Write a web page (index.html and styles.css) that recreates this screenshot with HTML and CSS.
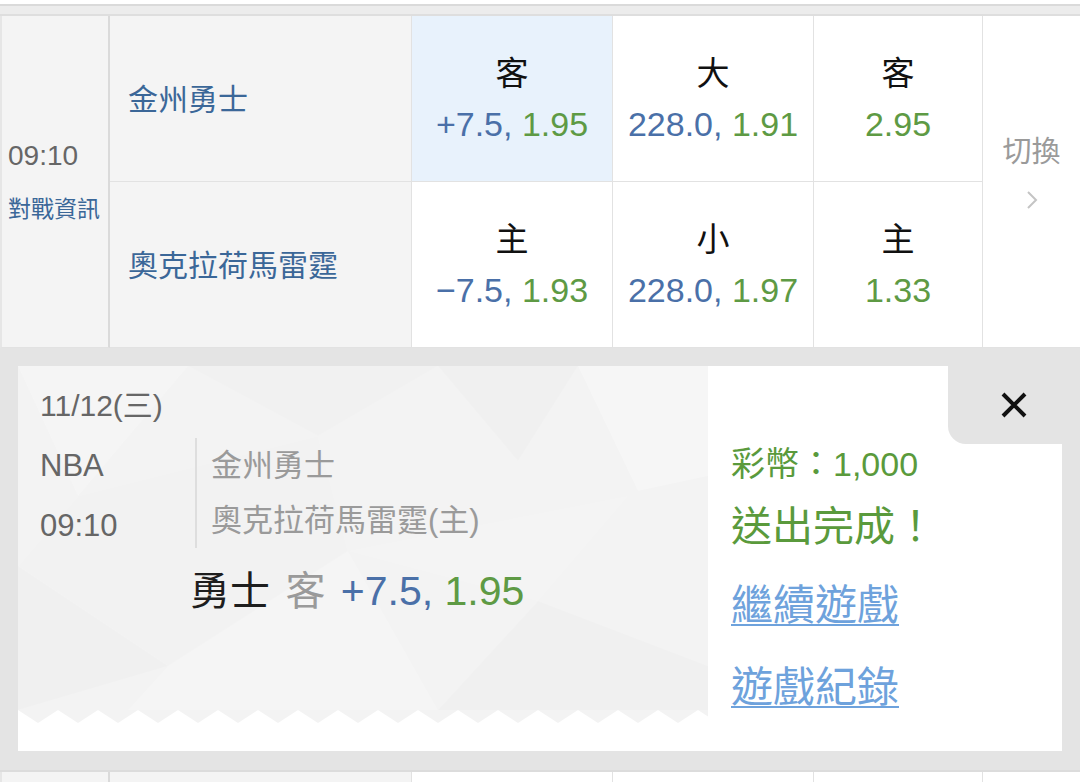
FILE: index.html
```html
<!DOCTYPE html>
<html>
<head>
    <meta charset="utf-8">
    <link rel="stylesheet" href="styles.css">
</head>
<body>
    <div class="top-gap"></div>
    <div class="band"></div>

    <div class="match">
        <div class="cell time-cell">
            <div class="kickoff">09:10</div>
            <div class="info-link">對戰資訊</div>
        </div>
        <div class="cell team-cell">金州勇士</div>
        <div class="cell odds-cell selected">
            <div class="odds-label">客</div>
            <div class="odds-value"><span class="line">+7.5,</span> <span class="price">1.95</span></div>
        </div>
        <div class="cell odds-cell">
            <div class="odds-label">大</div>
            <div class="odds-value"><span class="line">228.0,</span> <span class="price">1.91</span></div>
        </div>
        <div class="cell odds-cell">
            <div class="odds-label">客</div>
            <div class="odds-value"><span class="price">2.95</span></div>
        </div>
        <div class="cell switch-cell">
            <div class="switch-text">切換</div>
            <svg class="chevron" width="14" height="22" viewBox="0 0 14 22">
                <polyline points="3,3 11,11 3,19" fill="none" stroke="#c4c4c4" stroke-width="2"/>
            </svg>
        </div>
        <div class="cell team-cell">奧克拉荷馬雷霆</div>
        <div class="cell odds-cell">
            <div class="odds-label">主</div>
            <div class="odds-value"><span class="line">&minus;7.5,</span> <span class="price">1.93</span></div>
        </div>
        <div class="cell odds-cell">
            <div class="odds-label">小</div>
            <div class="odds-value"><span class="line">228.0,</span> <span class="price">1.97</span></div>
        </div>
        <div class="cell odds-cell">
            <div class="odds-label">主</div>
            <div class="odds-value"><span class="price">1.33</span></div>
        </div>
    </div>

    <div class="panel">
        <div class="receipt">
            <div class="ticket">
                <div class="ticket-body">
                    <svg class="poly" width="690" height="344" viewBox="0 0 690 344">
                        <polygon points="0,0 170,0 60,130" fill="#fff" opacity=".2"/>
                        <polygon points="170,0 420,0 300,70" fill="#000" opacity=".006"/>
                        <polygon points="420,0 560,0 500,95" fill="#000" opacity=".01"/>
                        <polygon points="560,0 690,0 690,110 620,125" fill="#fff" opacity=".25"/>
                        <polygon points="0,200 150,300 0,344" fill="#000" opacity=".012"/>
                        <polygon points="150,300 330,185 420,344 110,344" fill="#fff" opacity=".18"/>
                        <polygon points="420,344 520,235 690,300 690,344" fill="#000" opacity=".01"/>
                        <polygon points="330,185 520,235 610,130" fill="#fff" opacity=".15"/>
                        <polygon points="60,130 300,70 330,185 150,300 0,200" fill="#000" opacity=".005"/>
                    </svg>
                    <div class="ticket-content">
                        <div class="ticket-date">11/12(三)</div>
                        <div class="ticket-info">
                            <div class="league">
                                <div>NBA</div>
                                <div>09:10</div>
                            </div>
                            <div class="teams">
                                <div>金州勇士</div>
                                <div>奧克拉荷馬雷霆(主)</div>
                            </div>
                        </div>
                        <div class="pick">
                            <span class="pick-team">勇士</span>
                            <span class="pick-side">客</span>
                            <span class="line">+7.5,</span> <span class="price">1.95</span>
                        </div>
                    </div>
                </div>
                <svg class="zigzag" width="690" height="13" viewBox="0 0 690 13">
                    <defs>
                        <pattern id="teeth" width="40" height="13" patternUnits="userSpaceOnUse">
                            <polygon points="0,0 40,0 20,13" fill="#f3f3f3"/>
                        </pattern>
                    </defs>
                    <rect width="690" height="13" fill="url(#teeth)"/>
                </svg>
            </div>

            <div class="result">
                <div class="close-tab">
                    <svg width="28" height="28" viewBox="0 0 28 28">
                        <path d="M3 3 L25 25 M25 3 L3 25" stroke="#111" stroke-width="4"/>
                    </svg>
                </div>
                <div class="result-text">
                    <div class="coins">彩幣：1,000</div>
                    <div class="done">送出完成！</div>
                    <a class="result-link">繼續遊戲</a>
                    <a class="result-link">遊戲紀錄</a>
                </div>
            </div>
        </div>
    </div>

    <div class="match next">
        <div class="cell time-cell"></div>
        <div class="cell team-cell"></div>
        <div class="cell odds-cell"></div>
        <div class="cell odds-cell"></div>
        <div class="cell odds-cell"></div>
        <div class="cell switch-cell"></div>
    </div>
</body>
</html>
```

FILE: styles.css
```css
body {
    margin: 0;
    width: 1080px;
    height: 782px;
    overflow: hidden;
    background: #fff;
    font-family: "Liberation Sans", "Noto Sans CJK TC", sans-serif;
}

.top-gap {
    height: 4px;
}
.band {
    height: 8px;
    background: #ececec;
    border-top: 2px solid #dadada;
    border-bottom: 2px solid #dedede;
}

/* match table */
.match {
    display: grid;
    grid-template-columns: 110px 302px 201px 201px 169px 1fr;
    grid-template-rows: 166px 166px;
}
.cell {
    box-sizing: border-box;
    border-bottom: 1px solid #e2e2e2;
}
.time-cell {
    grid-row: span 2;
    background: #f4f4f4;
    border-left: 2px solid #e6e6e6;
    border-right: 2px solid #dadada;
    padding: 122px 0 0 6px;
}
.kickoff {
    font-size: 28px;
    line-height: 36px;
    color: #666;
}
.info-link {
    font-size: 23px;
    line-height: 30px;
    margin-top: 20px;
    color: #3b6798;
}
.team-cell {
    background: #f4f4f4;
    border-right: 1px solid #e2e2e2;
    display: flex;
    align-items: center;
    padding: 0 0 4px 18px;
    font-size: 30px;
    color: #3b6798;
}
.odds-cell {
    background: #fff;
    border-right: 1px solid #e2e2e2;
    display: flex;
    flex-direction: column;
    justify-content: center;
    align-items: center;
}
.odds-cell.selected {
    background: #e8f2fc;
}
.odds-label {
    font-size: 33px;
    line-height: 50px;
    color: #111;
}
.odds-value {
    font-size: 34px;
    line-height: 50px;
    white-space: nowrap;
}
.line {
    color: #4a70a8;
}
.price {
    color: #5e9a44;
}
.switch-cell {
    grid-row: span 2;
    background: #fff;
    display: flex;
    flex-direction: column;
    align-items: center;
    padding-top: 118px;
}
.switch-text {
    font-size: 29px;
    line-height: 36px;
    color: #9a9a9a;
}
.chevron {
    margin-top: 19px;
}

/* bet receipt */
.panel {
    background: #e4e4e4;
    padding: 18px 18px 19px;
    border-bottom: 2px solid #dcdcdc;
}
.receipt {
    display: flex;
    height: 385px;
    background: #fff;
}
.ticket {
    width: 690px;
    display: flex;
    flex-direction: column;
}
.ticket-body {
    position: relative;
    height: 344px;
    background: #f3f3f3;
    overflow: hidden;
}
.poly {
    position: absolute;
    left: 0;
    top: 0;
}
.zigzag {
    display: block;
}
.ticket-content {
    position: relative;
    padding: 22px 0 0 22px;
}
.ticket-date {
    font-size: 30px;
    line-height: 36px;
    color: #666;
}
.ticket-info {
    display: flex;
    align-items: flex-start;
    margin-top: 14px;
}
.league {
    width: 155px;
    font-size: 31px;
    line-height: 60px;
    margin-top: -2px;
    color: #666;
}
.teams {
    border-left: 2px solid #dedede;
    padding-left: 14px;
    font-size: 31px;
    line-height: 55px;
    color: #9a9a9a;
}
.pick {
    padding-left: 150px;
    margin-top: 10px;
    font-size: 41px;
    line-height: 50px;
    white-space: nowrap;
}
.pick-team {
    color: #1e1e1e;
    font-size: 40px;
}
.pick-side {
    color: #9a9a9a;
    font-size: 40px;
    margin: 0 4px;
}

.result {
    flex: 1;
    display: flex;
    flex-direction: column;
}
.close-tab {
    align-self: flex-end;
    box-sizing: border-box;
    width: 114px;
    height: 78px;
    padding-left: 18px;
    background: #e4e4e4;
    border-bottom-left-radius: 18px;
    display: flex;
    align-items: center;
    justify-content: center;
}
.result-text {
    padding-left: 23px;
    display: flex;
    flex-direction: column;
    align-items: flex-start;
}
.coins {
    font-size: 34px;
    line-height: 40px;
    color: #5a9a3c;
}
.done {
    font-size: 41px;
    line-height: 50px;
    margin-top: 18px;
    color: #5a9a3c;
}
.result-link {
    font-size: 42px;
    line-height: 56px;
    margin-top: 26px;
    color: #6ea2dc;
    text-decoration: underline;
    text-decoration-thickness: 2px;
    text-underline-offset: 4px;
}

.match.next .cell {
    border-bottom: none;
}
```
